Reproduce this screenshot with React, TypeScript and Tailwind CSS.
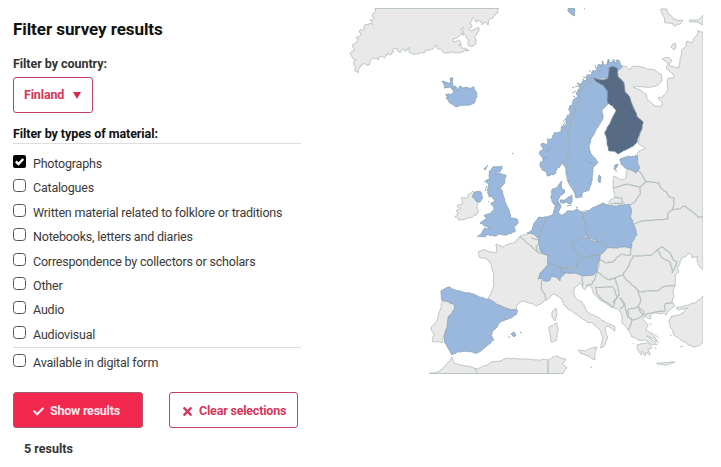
import React, { useState } from "react";
import { FaCheck, FaTimes } from "react-icons/fa";

type Pt = [number, number];

const parse = (s: string): Pt[] =>
  s.trim().split(/\s+/).map((p) => p.split(",").map(Number) as Pt);

// Midpoint displacement seeded by the segment itself, so a border shared by two countries stays identical.
function displace(a: Pt, b: Pt, amp: number, depth: number): Pt[] {
  const len = Math.hypot(b[0] - a[0], b[1] - a[1]);
  const onFrame = (a[1] < 9.5 && b[1] < 9.5) || (a[0] > 702 && b[0] > 702) || (a[1] > 373 && b[1] > 373);
  if (depth === 0 || len < 2.2 || onFrame) return [b];
  const h = Math.sin((a[0] + b[0]) * 12.9898 + (a[1] + b[1]) * 78.233) * 43758.5453;
  const side = a[0] + a[1] * 0.37 < b[0] + b[1] * 0.37 ? 1 : -1;
  const k = ((h - Math.floor(h)) * 2 - 1) * amp * side;
  const m: Pt = [(a[0] + b[0]) / 2 - ((b[1] - a[1]) / len) * k, (a[1] + b[1]) / 2 + ((b[0] - a[0]) / len) * k];
  return [...displace(a, m, amp * 0.8, depth - 1), ...displace(m, b, amp * 0.8, depth - 1)];
}

function trace(s: string, amp: number, close = true) {
  const pts = parse(s);
  const out: Pt[] = [pts[0]];
  for (let i = 1; i < pts.length; i++) out.push(...displace(pts[i - 1], pts[i], amp, 3));
  if (close) out.push(...displace(pts[pts.length - 1], pts[0], amp, 3));
  return "M" + out.map((p) => p[0].toFixed(1) + " " + p[1].toFixed(1)).join("L") + (close ? "Z" : "");
}

const greenland =
  "375,8.5 499,8.5 498,13 495,14 493,18 490,19 488,25 485,22 482,25 480,21 476,22 473,18 470,22 472,26 470,30 475,29 478,27 479,31 476,35 476,42 472,47 468,45 469,40 466,37 463,27 461,30 464,35 459,36 453,39 455,42 460,41 459,45 465,48 469,50.5 461,52 455,53 449,53 442,51 438,49 436,45 433,49 427,50 423,53 418,54 412,53 409,52 410,48 406,51 402,49 399,52 397,48 393,49 392,54 387,54 385,58 380,56 378,60 374,58 370,61 368,65 364,63 360,67 358,73 355,70 354,65 356,59 352,57 350,54 354,51 353,44 357,42 356,37 361,35 360,30 364,28 366,24 373,25 370,20 374,19 373,14";
const mainland =
  "703,32 701,32 698,30 697,35 694,38 692,43 687,41 686,46 682,50 680,60 679,68 673,66.5 669,65 672,60 667,57.5 662,59 668,63 667,69 672,73 674,78 668,78 667,83 668,90 663,97 658,98 662,102 662,106 655,106 648,100 646,94 640,90 633,87 638,86.5 650,87.5 658,85 662,80 661,74 655,70 642,67.5 633,66 630,70 627,66.5 622,66 617,70 619,77 624,83 625,92 630,98 633,107 637,117 643,122 642,128 638,143 646,148 638,152 634,160 636,170 627,170 626,177 623,180 614,176 613,187 615,197 610,200 609,204 602,208 570,214 545,222 527,234 520,236 515,242 507,245 503,247 496,244 497,252 490,252 485,250 478,252 479,257 488,260 492,268 494,273 494,285 488,299 498,305 508,309 517,310 517,305 523,301 530,303 537,306 543,302 548,299 553,294 558,296 562,299 564,305 567,308 573,312 580,317 587,322 593,323 600,330 603,337 600,348 604,346 608,338 605,330 607,326 611,328 615,331 615,327 605,322 598,317 588,313 582,302 575,297 574,288 580,283 583,288 585,290 587,285 592,287 593,293 600,300 610,306 620,311 622,315 622,323 627,328 632,337 638,340 645,340 652,345 657,345 652,340 646,336 650,337 657,341 655,338 652,333 646,330 648,325 643,320 645,316 650,319 650,316 655,313 663,313 666,315 668,311 675,306 672,301 674,297 673,291 675,286 675,275 679,272 677,268 680,263 682,257 685,257 688,253 692,255 692,258 698,256 697,260 700,267 703,270";
const borders = [
  "646,182 659,183 661,188 667,193 669,197 674,198 674,204 672,210 668,213 668,219",
  "634,224 642,221 655,220 668,219",
  "672,210 679,209 685,206 690,210 694,213 698,217 703,217",
  "613,188 628,184 640,187",
  "636,170 640,172 646,182 640,187 640,195 635,202 630,205",
  "615,197 622,198 623,203 610,204",
  "600,255 600,260 607,263 613,262 617,257 622,254 631,255 631,248",
  "600,258 597,272 604,277 610,280 617,277 623,275 629,266 633,257",
  "632,256 643,256 652,255 657,250 662,258 670,262 672,273",
  "657,250 663,247 670,253 673,260 677,262 672,273",
  "623,275 628,281 635,287 640,292 657,291 665,286 675,286",
  "638,290 641,300 638,307 643,315 655,312 665,311 665,304 673,303",
  "628,309 638,307 644,312 642,316 632,320 628,317 628,309",
  "595,287 613,287 617,297 613,307 604,301 597,294 595,287",
  "582,277 583,286",
  "586,286 592,284 597,273",
  "610,280 615,278 618,288 619,295 613,303",
  "620,298 625,305 620,309",
  "620,298 625,306 628,317 632,320 628,330",
  "542,280 541,288 545,295 546,300",
  "520,236 527,243 538,252 548,256",
];
const spain =
  "441,291 446,288 450,287 457,291 463,292 470,293 479,297 488,299 498,305 508,309 517,310 516,315 508,319 500,322 496,328 492,332 491,336 494,340 485,347 477,353 467,351 457,352 452,355 448,348 444,342 444,336 447,328 448,317 453,311 455,305 442,300";
const portugal =
  "442,300 455,305 453,311 448,317 447,328 444,336 442,343 432,341 434,335 431,328 437,320 440,310";
const britain =
  "493,167 502,166 500,172 495,174 506,175 505,182 502,186 497,188 501,189 503,194 505,202 508,208 510,214 510,218 517,219 518,223 514,228 515,232 507,235 500,234 494,236 488,234 484,237 477,237 483,231 485,228 491,228 485,226 480,223 487,218 484,215 491,213 494,208 491,204 495,201 493,197 489,197 487,190 489,185 486,182 490,178 489,172";
const ireland =
  "462,197 465,198 468,197 470,194 473,191 475,195 472,197 476,201 478,204 478,210 476,215 468,218 460,220 455,217 458,214 456,211 461,208 457,206 463,203";
const norway =
  "620,63 618,60 616,64 613,59 611,63 608,59 606,65 603,61 601,67 598,65 597,70 593,70 591,75 587,75 588,80 583,79 582,84 577,83 580,88 576,93 578,96 573,100 574,104 570,107 570,114 566,118 567,123 561,127 562,131 554,134 553,138 547,139 548,143 541,144 544,149 540,151 541,156 543,161 540,164 542,170 548,176 556,173 562,164 563,161 566,168 567,160 570,152 569,142 568,132 571,122 575,112 576,106 580,97 582,88 588,84 594,79 598,82 600,79 608,79 609,68 616,68 617,71 622,66";
const sweden =
  "594,79 597,82 603,85 607,90 608,104 602,110 603,118 598,127 592,137 589,147 592,155 598,162 593,167 592,178 589,190 583,192 582,197 576,198 573,190 569,183 566,174 566,168 567,160 570,152 569,142 568,132 571,122 575,112 576,106 580,97 582,88 588,84";
const finland =
  "609,68 612,66.5 617,68 618,77 624,83 625,92 630,98 633,107 637,117 643,122 642,128 637,142 633,146 627,149 618,154 614,151 609,151 607,143 605,133 609,125 614,115 616,110 613,106 608,103 607,90 603,85 597,82 594,78 600,80 608,79";
const germany =
  "557,200 561,207 558,213 563,215 567,211 572,211 577,209 582,213 585,223 587,235 580,238 573,243 575,252 583,258 577,264 577,268 568,268 560,267 548,264 548,255 541,252 539,243 539,236 542,230 545,222 547,217 553,214";
const poland =
  "582,213 592,208 602,203 610,206 620,205 629,204 632,212 630,217 634,225 637,235 632,242 631,248 623,247 608,248 600,242 587,237 585,223";
const czechia =
  "573,243 580,238 587,237 593,241 600,242 608,247 600,255 593,255 590,257 583,258 575,252";
const austria =
  "583,258 590,256 600,255 598,263 597,272 593,275 583,276 573,273 562,272 560,268 570,269 577,268 577,264";
const switzerland =
  "548,264 560,267 561,272 567,272 562,276 560,281 556,277 552,276 549,281 544,281 542,278 538,279 540,273 544,269";
const netherlands =
  "527,233 532,230 535,222 539,217 547,217 545,222 545,228 541,232 539,239 534,234";
const denmark =
  "552,190 556,188 562,181 562,189 565,191 560,196 558,200 557,206 553,203 551,196";
const estonia =
  "620,159 628,156 638,156 637,162 640,168 636,173 630,169 625,168 621,164";
const turkey =
  "703,296 699,300 695,303 685,306 676,308 678,310 688,308 684,312 679,315 672,316 669,320 670,327 673,332 675,336 681,340 687,344 693,347 698,346 703,342";
const africaMorocco =
  "429,373.5 438,372 445,366 452,357 454,363 460,365 468,366 476,369 485,366 492,362 500,361 507,358 520,359 535,360 548,360 548,373.5";
const tunisia = "548,373.5 549,365 548,360 553,357 558,356 560,358 566,359 562,364 567,368 563,373.5";

const land = "fill-[#e9e9e9] stroke-[#b3bfbf]";
const surveyed = "fill-[#9ab8de] stroke-[#8fa6b6]";

function SurveyMap() {
  return (
    <svg viewBox="349 8 354 366" className="block h-[366px] w-[354px]" strokeWidth="0.9" strokeLinejoin="round">
      <g className={land}>
        <path d={trace(greenland, 1.4)} />
        <path d={trace(mainland, 0.6)} />
        <path d={trace(turkey, 0.8)} />
        <path d={trace(africaMorocco, 0.5)} />
        <path d={trace(tunisia, 0.5)} />
        <path d="M475 368L477 373.5" />
        <path d={trace(portugal, 0.6)} />
        <path d={trace(ireland, 1)} />
        <path d={trace("661,9 667,9 668,13 672,17 677,20 683,21 680,24 675,26 672,23 665,23 664,17 662,13", 0.7)} />
        <path d="M703 15L699 20H689L690 22H697L703 25Z" />
        <path d="M673 44L675 43L676 47L674 50L671 47Z" />
        <path d={trace("578,350 585,351 597,347 595,353 595,360 588,356 580,353", 0.5)} />
        <path d={trace("549,327 557,323 558,328 556,341 551,342 550,334", 0.5)} />
        <path d="M556 308L557 314L555 321L552 317L552 312Z" />
        <path d={trace("637,345 648,343 652,348 648,349 650,355 646,352 645,356 642,351 641,355 638,350", 0.4)} />
        <path d={trace("657,363 662,363 675,362 667,365 657,364", 0.3)} />
        <path d="M649 323l3 2M654 334l5 4M659 343l-4-2M590 366l2 2M633 343l1 1M680 347l3-1M672 336l-2-1M655 347l1 2" />
      </g>
      <g className="fill-none stroke-[#b3bfbf]" strokeWidth="1.2">
        {borders.map((b) => (
          <path key={b} d={trace(b, 0.6, false)} />
        ))}
        <path d={trace("531,238 539,240", 0.5, false)} />
        <path d="M538 252L536 247L539 244" />
      </g>
      <g className={surveyed}>
        <path d={trace(spain, 0.7)} />
        <path d={trace(britain, 0.8)} />
        <path d={trace("472,196 475,192 481,192 483,198 480,202 476,201", 0.6)} />
        <path d={trace(norway, 1.4)} />
        <path d={trace(sweden, 0.6)} />
        <path d={trace(netherlands, 0.6)} />
        <path d={trace(germany, 0.7)} />
        <path d={trace(poland, 0.7)} />
        <path d={trace(czechia, 0.6)} />
        <path d={trace(switzerland, 0.6)} />
        <path d={trace(austria, 0.6)} />
        <path d={trace(denmark, 0.8)} />
        <path d={trace(estonia, 0.6)} />
        <path d={trace("446,94 451,95 454,92 452,89 455,86 457,91 460,86 462,88 466,87 470,89 474,87 476,92 477,97 474,103 466,105 456,107 450,103 446,98 449,97", 0.9)} />
        <path d="M453 90L450 87L444 88L445 86L442 81L448 83L451 83L450 78L453 78L452 82L454 88Z" />
        <path d="M568 8.5H574.5V16L571 14L568 11Z" />
        <path d={trace("566,199 570,197 572,195 572,202 569,204 565,201", 0.6)} />
        <path d="M560 200l4 0l1 3l-4 0ZM567 206l5-1M576 207l2 1M599 175l2 2l-1 6l-2-2ZM591 185l0-4M615 165l3-1l-1 3l-3 3ZM616 169l0 3M588 162l6 2" />
        <path d="M511 334l3-2l2 3l-2 2ZM520 332l2 1M508 337l2 0M486 170l-2-1l4-4M487 180l-3 2M485 191l2-5M488 202l1-1M512 153.5h1.500M562 127l3-5M576 91l-4 2M572 88l2-1M584 8.800h1" />
      </g>
      <path
        d="M547 149l3-1M545 151h5M543 158l4-1M566 119l-3 2M571 105l-2 2M575 97l-2-1M578 86l-3 1M586 78l-3-1M591 72l-2-2M596 68l-1-3M603 65l-1-4M608 64l0-4M614 63l1-3M599 72l3-2M590 79l3-2"
        className="fill-none stroke-[#8fa6b6]"
      />
      <path d={trace(finland, 0.5)} className="fill-[#586b84] stroke-[#6d7f93]" />
      <g className="fill-none stroke-[#a3b4bd]" strokeWidth="1.2">
        <path d={trace("594,79 588,84 582,88 580,97 576,106 575,112 571,122 568,132 569,142 570,152 567,160 566,168", 0.6, false)} />
        <path d={trace(czechia, 0.6)} strokeDasharray="4 1.500" />
        <path d={trace("582,213 585,223 587,235", 0.7, false)} strokeDasharray="4 1.500" />
        <path d={trace("548,264 560,267 568,268 577,268 577,264 583,258", 0.7, false)} strokeDasharray="4 1.500" />
        <path d={trace("547,217 545,222 542,230 539,236 539,243", 0.7, false)} strokeDasharray="4 1.500" />
      </g>
    </svg>
  );
}

const materials = [
  "Photographs",
  "Catalogues",
  "Written material related to folklore or traditions",
  "Notebooks, letters and diaries",
  "Correspondence by collectors or scholars",
  "Other",
  "Audio",
  "Audiovisual",
];

function CheckRow({ label, checked, onToggle }: { label: string; checked: boolean; onToggle: () => void }) {
  return (
    <label className="flex h-[24.375px] cursor-pointer items-start">
      <input type="checkbox" className="sr-only" checked={checked} onChange={onToggle} />
      <span
        className={
          checked
            ? "flex size-[13px] items-center justify-center rounded-[2px] bg-black"
            : "size-[13px] rounded-[3.5px] border border-[#555] bg-white"
        }
      >
        {checked && (
          <svg viewBox="0 0 13 13" className="size-[13px] fill-none stroke-white" strokeWidth="2.4">
            <path d="M2.800 6.500L5.500 9L10.300 4" />
          </svg>
        )}
      </span>
      <span className="ml-[7px] pt-[1px] text-[12.5px] leading-4 tracking-[-0.2px] whitespace-nowrap text-[#3a3a3a]">
        {label}
      </span>
    </label>
  );
}

export default function App() {
  const [selected, setSelected] = useState<string[]>(["Photographs"]);
  const toggle = (m: string) =>
    setSelected((s) => (s.includes(m) ? s.filter((x) => x !== m) : [...s, m]));

  return (
    <div className="flex h-[467px] w-[721px] overflow-hidden bg-white font-[Roboto,sans-serif] text-[#222]">
      <section className="w-[336px] shrink-0 pt-[19px] pl-[13px]">
        <h2 className="text-[17px] leading-5 font-bold tracking-[-0.07px] text-[#111]">Filter survey results</h2>
        <p className="mt-[17px] text-[12.5px] leading-4 font-bold tracking-[-0.05px] text-[#333]">Filter by country:</p>
        <button className="mt-[5px] flex h-[36px] w-[80px] items-center rounded-[3px] border border-[#c2415f] pl-[10px] text-[12.5px] font-bold tracking-[-0.15px] text-[#d6375a]">
          Finland
          <svg viewBox="0 0 8 7" className="mt-px ml-[9px] h-[7px] w-[8px] fill-[#d6294e]">
            <path d="M0 0H8L4 7Z" />
          </svg>
        </button>
        <p className="mt-[13px] text-[12.5px] leading-4 font-bold tracking-[-0.07px] text-[#111]">
          Filter by types of material:
        </p>
        <div className="mt-px h-[205px] w-[288px] border-y border-[#ddd] pt-[11px]">
          {materials.map((m) => (
            <CheckRow key={m} label={m} checked={selected.includes(m)} onToggle={() => toggle(m)} />
          ))}
        </div>
        <div className="mt-[6px]">
          <CheckRow
            label="Available in digital form"
            checked={selected.includes("digital")}
            onToggle={() => toggle("digital")}
          />
        </div>
        <div className="mt-[14px] flex gap-[26px]">
          <button className="flex h-[36px] w-[130px] items-center rounded-[3px] border border-[#a85a6c] bg-[#f3284f] pt-[2px] pl-[19px] text-[12.5px] font-bold tracking-[-0.23px] text-[#ffe9ee]">
            <FaCheck className="mr-[6px] size-[11px]" />
            Show results
          </button>
          <button className="flex h-[36px] w-[129px] items-center rounded-[3px] border border-[#c2415f] bg-white pt-[2px] pl-[11px] text-[12.5px] font-bold tracking-[-0.2px] whitespace-nowrap text-[#d6375a]">
            <FaTimes className="mr-[5px] size-[13px]" />
            Clear selections
          </button>
        </div>
        <p className="mt-[13px] ml-[11px] text-[12.5px] leading-4 font-bold text-[#333]">5 results</p>
      </section>
      <section className="pt-2 pl-[13px]">
        <SurveyMap />
      </section>
    </div>
  );
}
